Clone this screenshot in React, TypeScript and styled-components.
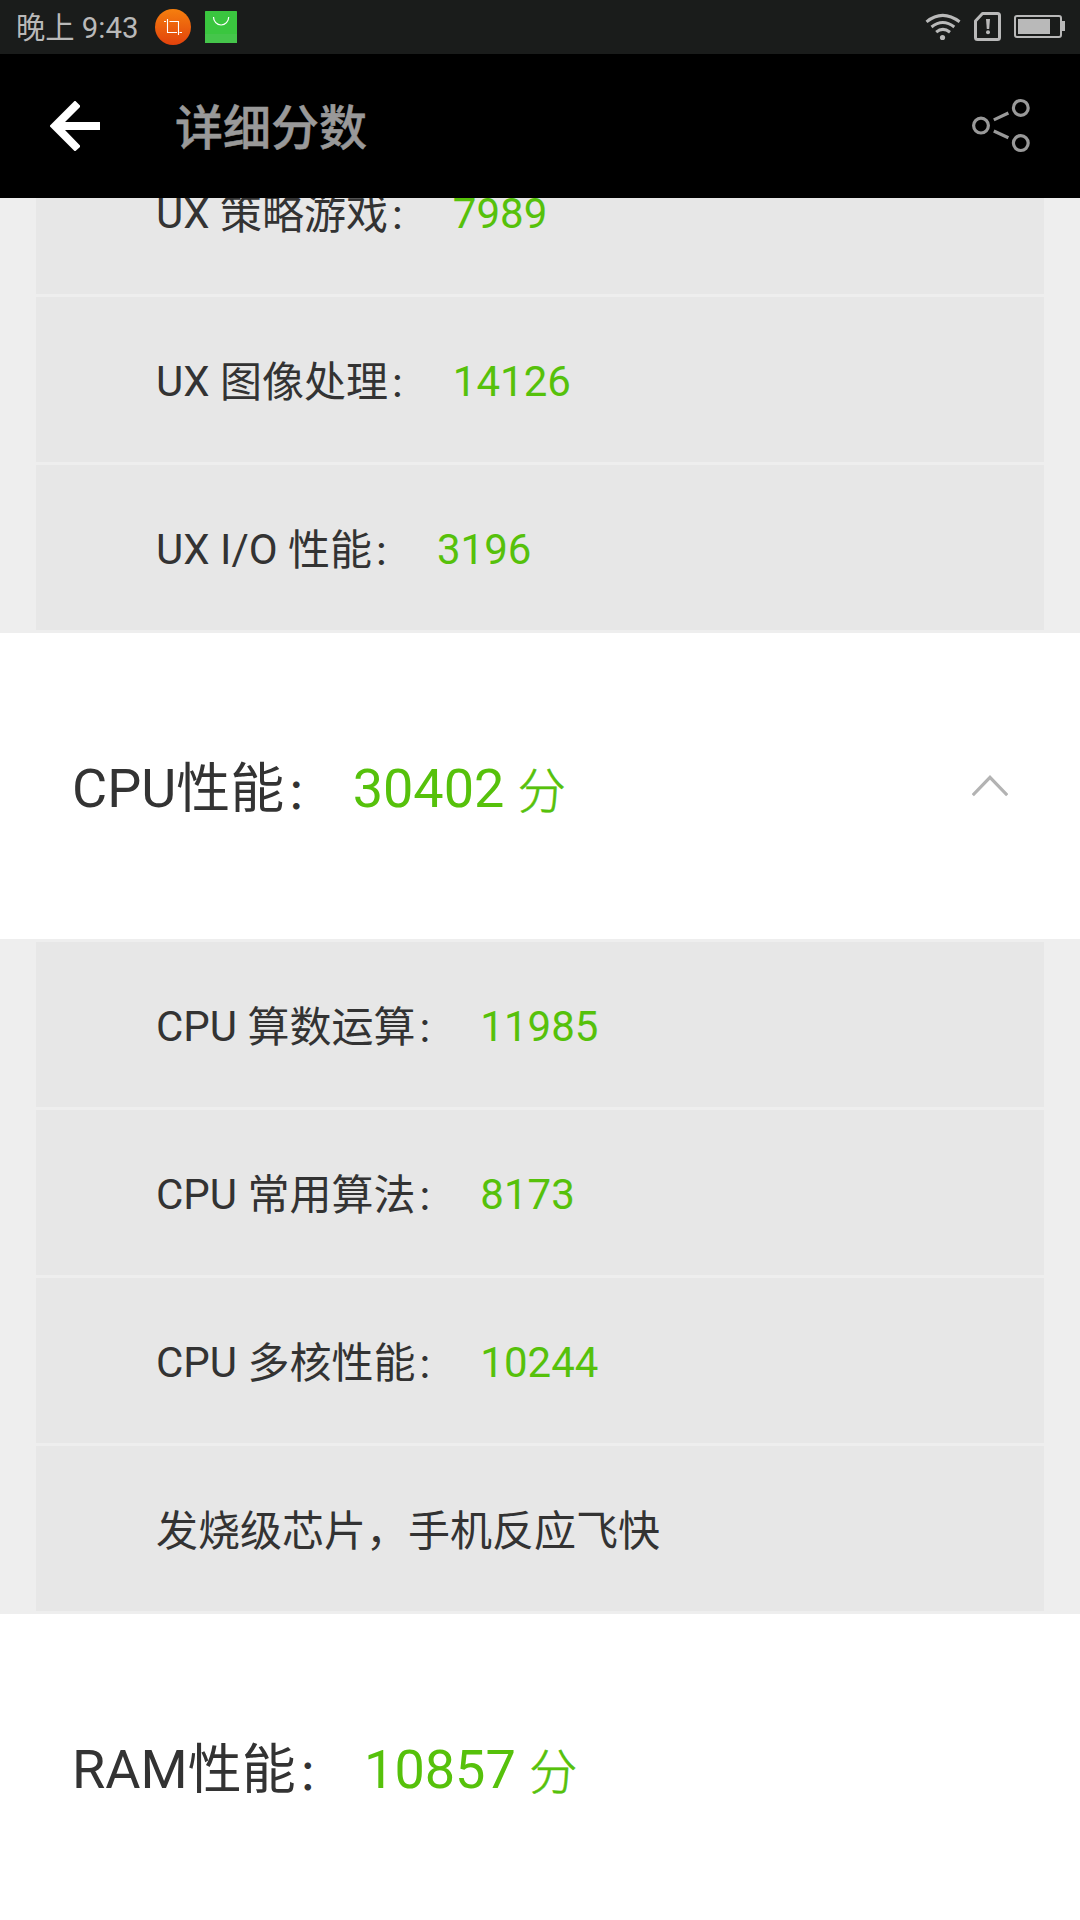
import React from "react";
import styled, { createGlobalStyle } from "styled-components";

const Global = createGlobalStyle`
  * { box-sizing: border-box; }
  html, body { margin: 0; padding: 0; background: #fff; }
  body { font-family: Roboto, "Noto Sans CJK SC", sans-serif; color: #333; overflow: hidden; }
`;

const Screen = styled.div`
  width: 1080px;
  height: 1920px;
  overflow: hidden;
  display: flex;
  flex-direction: column;
  background: #fff;
`;

const StatusBar = styled.div`
  flex: none;
  height: 54px;
  background: #1a1c1b;
  color: #b9b9b9;
  display: flex;
  align-items: center;
  justify-content: space-between;
  padding: 0 15px 0 16px;
`;

const StatusGroup = styled.div<{ $gap: number }>`
  display: flex;
  align-items: center;
  gap: ${(p) => p.$gap}px;
`;

const Clock = styled.span`
  font-size: 29.3px;
  line-height: 52px;
  height: 54px;
  padding-top: 2px;
  width: 125px;
  white-space: pre;
`;

const Header = styled.header`
  flex: none;
  height: 144px;
  background: #000;
  display: flex;
  align-items: center;
  padding: 0 49px 0 50px;
`;

const Title = styled.h1`
  flex: 1;
  margin: 0 0 0 75px;
  padding-top: 5px;
  font-size: 48px;
  line-height: 72px;
  font-weight: 500;
  color: #999;
  -webkit-text-stroke: 0.5px #999;
`;

const Scroller = styled.main`
  flex: 1;
  min-height: 0;
  overflow: hidden;
  display: flex;
  flex-direction: column;
`;

const Panel = styled.ul<{ $clipped?: boolean }>`
  flex: none;
  list-style: none;
  margin: ${(p) => (p.$clipped ? "-72px" : "0")} 0 0;
  padding: 3px 36px;
  background: #eee;
  display: flex;
  flex-direction: column;
  gap: 3px;
`;

const Row = styled.li`
  height: 165px;
  padding: 4px 120px 0;
  background: #e7e7e7;
  display: flex;
  align-items: center;
  font-size: 42px;
  line-height: 60px;
  white-space: pre;
`;

const Han = styled.span`
  position: relative;
  top: 1px;
`;

const Colon = styled.span`
  display: inline-block;
  width: 1.25em;
  padding-left: 0.03em;
  font-size: 0.8em;
  line-height: 1;
  position: relative;
  top: 0.04em;
`;

const Score = styled.span<{ $inset: number }>`
  color: #56c10b;
  margin-left: ${(p) => p.$inset}px;
`;

const Section = styled.section`
  flex: none;
  height: 306px;
  padding: 0 72px;
  background: #fff;
  display: flex;
  align-items: center;
  justify-content: space-between;
`;

const Heading = styled.div`
  padding-top: 6px;
  font-size: 54px;
  line-height: 76px;
  white-space: pre;
`;

const Unit = styled.span`
  font-size: 48px;
  line-height: 1;
  font-weight: 300;
  -webkit-text-stroke: 0.6px #56c10b;
  position: relative;
  top: 1px;
`;

const WifiIcon = () => (
  <svg width="37" height="30" viewBox="925 12 37 30" fill="none" stroke="#b9b9b9" strokeWidth="3">
    <path d="M926.5 21.8Q942.5 9 959.6 21.8M931.5 27Q942.7 18 954.3 27M936.2 32.2Q942.7 26.5 950 32.2" />
    <circle cx="942.5" cy="37.5" r="2.6" fill="#b9b9b9" stroke="none" />
  </svg>
);

const SimIcon = () => (
  <svg width="28" height="30" viewBox="974 13 28 30" fill="none" stroke="#b9b9b9" strokeWidth="3">
    <path d="M982.5 14.5H997.5Q999.5 14.5 999.5 16.5V38.5Q999.5 40.5 997.5 40.5H977.5Q975.5 40.5 975.5 38.5V22Z" strokeLinejoin="round" />
    <path d="M986 20H990L989.2 30H986.8Z" fill="#b9b9b9" stroke="none" />
    <circle cx="988" cy="33.3" r="2" fill="#b9b9b9" stroke="none" />
  </svg>
);

const BatteryIcon = () => (
  <svg width="51" height="24" viewBox="1014 16 51 24">
    <rect x="1015" y="17" width="46" height="21" rx="2" fill="none" stroke="#b9b9b9" strokeWidth="2" />
    <rect x="1018" y="20" width="32" height="15" fill="#b9b9b9" />
    <rect x="1062" y="22" width="3" height="10" fill="#b9b9b9" />
  </svg>
);

const CropBadge = () => (
  <svg width="36" height="36" viewBox="155 9 36 36">
    <defs>
      <linearGradient id="orange" x1="0" y1="0" x2="0" y2="1">
        <stop offset="0" stopColor="#f57f0e" />
        <stop offset="1" stopColor="#e2420c" />
      </linearGradient>
    </defs>
    <circle cx="173" cy="27" r="18" fill="url(#orange)" />
    <path d="M167.5 19V32.5H177M179.5 32.5H182M164 21.5H166M169.5 21.5H178.5V35" fill="none" stroke="#fff" strokeWidth="1.1" />
  </svg>
);

const BagBadge = () => (
  <svg width="32" height="32" viewBox="205 11 32 32">
    <rect x="205" y="11" width="32" height="32" rx="0.5" fill="#3ac63f" />
    <rect x="205" y="34" width="32" height="9" fill="#45c54b" />
    <path d="M213.5 17A7.6 8 0 0 0 228.7 17" fill="none" stroke="#fff" strokeWidth="1.2" />
  </svg>
);

const BackIcon = () => (
  <svg width="50" height="50" viewBox="0 0 50 50">
    <path d="M50 21.1V28.9H15L30 44.5V46L25.5 50H24.5L0 25.5V24.5L24.5 0H25.5L30 4.5V6L15 21.1Z" fill="#fff" />
  </svg>
);

const ShareIcon = () => (
  <svg width="60" height="56" viewBox="971 98 60 56" fill="none" stroke="#999" strokeWidth="3.2">
    <circle cx="981" cy="125.6" r="7.4" />
    <circle cx="1020.8" cy="107.9" r="7.4" />
    <circle cx="1020.8" cy="143.1" r="7.4" />
    <path d="M993.8 119.9L1008.4 113M993.8 131L1008.4 137.8" />
  </svg>
);

const ChevronUp = () => (
  <svg width="36" height="22" viewBox="0 0 36 22">
    <path d="M0.8 20.2L18 2.4L35.2 20.2" fill="none" stroke="#b3b3b3" strokeWidth="3.2" />
  </svg>
);

const uxRows = [
  { latin: "UX ", han: "策略游戏", value: "7989" },
  { latin: "UX ", han: "图像处理", value: "14126" },
  { latin: "UX I/O ", han: "性能", value: "3196" },
];

const cpuRows = [
  { latin: "CPU ", han: "算数运算", value: "11985" },
  { latin: "CPU ", han: "常用算法", value: "8173" },
  { latin: "CPU ", han: "多核性能", value: "10244" },
];

type Entry = { latin: string; han: string; value: string };

const Label = ({ latin, han }: { latin: string; han: string }) => (
  <>
    {latin}
    <Han>{han}</Han>
    <Colon>：</Colon>
  </>
);

const ScoreRow = ({ latin, han, value }: Entry) => (
  <Row>
    <div>
      <Label latin={latin} han={han} />
      {"  "}
      <Score $inset={2}>{value}</Score>
    </div>
  </Row>
);

const SectionTitle = ({ latin, han, value }: Entry) => (
  <Heading>
    <Label latin={latin} han={han} />{" "}
    <Score $inset={1}>
      {value} <Unit>分</Unit>
    </Score>
  </Heading>
);

export default function App() {
  return (
    <Screen>
      <Global />
      <StatusBar>
        <StatusGroup $gap={14}>
          <Clock>晚上 9:43</Clock>
          <CropBadge />
          <BagBadge />
        </StatusGroup>
        <StatusGroup $gap={12}>
          <WifiIcon />
          <SimIcon />
          <BatteryIcon />
        </StatusGroup>
      </StatusBar>
      <Header>
        <BackIcon />
        <Title>详细分数</Title>
        <ShareIcon />
      </Header>
      <Scroller>
        <Panel $clipped>
          {uxRows.map((row) => (
            <ScoreRow key={row.han} {...row} />
          ))}
        </Panel>
        <Section>
          <SectionTitle latin="CPU" han="性能" value="30402" />
          <ChevronUp />
        </Section>
        <Panel>
          {cpuRows.map((row) => (
            <ScoreRow key={row.han} {...row} />
          ))}
          <Row>
            <Han>发烧级芯片，手机反应飞快</Han>
          </Row>
        </Panel>
        <Section>
          <SectionTitle latin="RAM" han="性能" value="10857" />
        </Section>
      </Scroller>
    </Screen>
  );
}
